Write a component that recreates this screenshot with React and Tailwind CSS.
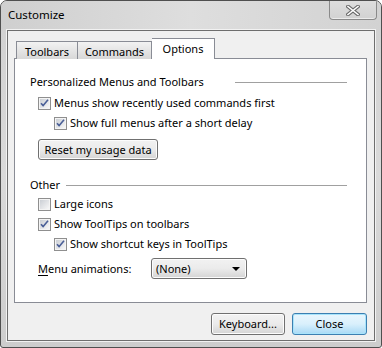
import React from "react";

const font = { fontFamily: '"Noto Sans", "Open Sans", sans-serif' };

function Check({ checked }) {
  return (
    <svg width="13" height="13" viewBox="0 0 13 13" className="shrink-0">
      <defs>
        <linearGradient id="cbg" x1="0" y1="0" x2="1" y2="1">
          <stop offset="0" stopColor="#cbcfd5" />
          <stop offset="1" stopColor="#f7f7f7" />
        </linearGradient>
      </defs>
      <rect x="0.5" y="0.5" width="12" height="12" fill="#f4f4f4" stroke="#8f8f8f" />
      <rect x="2" y="2" width="9" height="9" fill="url(#cbg)" />
      {checked && (
        <path
          d="M3 6.2 L5.2 8.6 L10 2.8"
          fill="none"
          stroke="#4a5f97"
          strokeWidth="1.6"
          strokeLinejoin="round"
        />
      )}
    </svg>
  );
}

function CheckRow({ checked, indent, children }) {
  return (
    <div className={`flex items-center h-[20px] gap-[3px] ${indent ? "pl-[24px]" : "pl-[8px]"}`}>
      <Check checked={checked} />
      <span className="-mt-px">{children}</span>
    </div>
  );
}

function Heading({ children, textW }) {
  return (
    <div className="flex items-center h-[16px]">
      <span className={`-mt-px ${textW || "pr-[6px]"}`}>{children}</span>
      <div className="flex-1 h-px bg-[#a0a0a0]" />
    </div>
  );
}

function Btn({ children, def, className = "", h = "h-[22px]" }) {
  return (
    <div
      className={`flex items-center justify-center ${h} rounded-[3px] border ${
        def
          ? "border-[#3c7fb1] bg-gradient-to-b from-[#eaf6fd] via-[#d9f0fc] to-[#a7d9f5] shadow-[inset_0_0_0_1px_#a8e4fb]"
          : "border-[#707070] bg-gradient-to-b from-[#f2f2f2] via-[#ebebeb] to-[#d4d4d4] shadow-[inset_0_0_0_1px_#fcfcfc]"
      } ${className}`}
    >
      {children}
    </div>
  );
}

export default function App() {
  return (
    <div
      style={font}
      className="w-[382px] h-[348px] border border-[#4f4f4f] rounded-t-[7px] rounded-b-[3px] bg-gradient-to-b from-[#d0d0d0] via-[#dadada] to-[#cdcdcd] flex flex-col text-[11px] text-black leading-none overflow-hidden"
    >
      <div className="h-[28px] flex items-start justify-between bg-gradient-to-r from-[#cfcfcf] via-[#dedede] to-[#d2d2d2]">
        <span className="pl-[7px] pt-[8px] text-[11.5px]">Customize</span>
        <div className="mr-[4px] w-[48px] h-[19px] rounded-b-[4px] border border-t-0 border-[#8a8a8a] bg-gradient-to-b from-[#dedede] to-[#d2d2d2] flex items-center justify-center shadow-[inset_0_-1px_0_#ececec]">
          <svg width="14" height="11" viewBox="0 0 14 11">
            <path d="M2 1.5 L12 9.5 M12 1.5 L2 9.5" stroke="#6b6b6b" strokeWidth="3.6" strokeLinecap="square" />
            <path d="M2 1.5 L12 9.5 M12 1.5 L2 9.5" stroke="#ffffff" strokeWidth="1.6" strokeLinecap="square" />
          </svg>
        </div>
      </div>
      <div className="flex-1 mx-[5px] mb-[5px] border border-[#f2f2f2] flex">
        <div className="flex-1 border border-[#6e6e6e] bg-[#f0f0f0] flex flex-col pt-[8px] pl-[6px] pr-[7px]">
          <div className="flex items-end h-[20px] pl-[2px] -mb-px relative z-10">
            <div className="h-[18px] w-[62px] border border-b-0 border-[#898c95] bg-gradient-to-b from-[#f2f2f2] to-[#d8d8d8] flex items-center justify-center pt-px">
              Toolbars
            </div>
            <div className="h-[18px] w-[74px] border border-b-0 border-l-0 border-[#898c95] bg-gradient-to-b from-[#f2f2f2] to-[#d8d8d8] flex items-center justify-center pt-px">
              Commands
            </div>
            <div className="h-[21px] w-[63px] border border-b-0 border-l-0 border-[#898c95] bg-white flex items-start justify-center pt-[4px]">
              Options
            </div>
          </div>
          <div className="h-[245px] border border-[#898c95] bg-white flex flex-col pl-[15px] pr-[19px] pt-[15px]">
            <Heading textW="w-[205px]">Personalized Menus and Toolbars</Heading>
            <div className="mt-[3px]">
              <CheckRow checked>Menus show recently used commands first</CheckRow>
              <CheckRow checked indent>
                Show full menus after a short delay
              </CheckRow>
            </div>
            <Btn h="h-[21px]" className="mt-[6px] ml-[8px] w-[120px]">
              <span className="-mt-px">Reset my usage data</span>
            </Btn>
            <div className="mt-[17px]">
              <Heading>Other</Heading>
            </div>
            <div className="mt-px">
              <CheckRow>Large icons</CheckRow>
              <CheckRow checked>Show ToolTips on toolbars</CheckRow>
              <CheckRow checked indent>
                Show shortcut keys in ToolTips
              </CheckRow>
            </div>
            <div className="mt-[4px] pl-[8px] flex items-center h-[21px]">
              <span className="w-[113px] -mt-px">
                <span className="underline underline-offset-2">M</span>enu animations:
              </span>
              <Btn h="h-[21px]" className="w-[96px] !justify-between px-[4px]">
                <span className="-mt-px">(None)</span>
                <svg width="8" height="4" viewBox="0 0 8 4" className="mr-[2px]">
                  <path d="M0 0 H8 L4 4 Z" fill="#000" />
                </svg>
              </Btn>
            </div>
          </div>
          <div className="flex justify-end gap-[7px] mt-[10px]">
            <Btn className="w-[74px]">
              <span className="-mt-px">Keyboard...</span>
            </Btn>
            <Btn def className="w-[75px]">
              <span className="-mt-px">Close</span>
            </Btn>
          </div>
        </div>
      </div>
    </div>
  );
}
